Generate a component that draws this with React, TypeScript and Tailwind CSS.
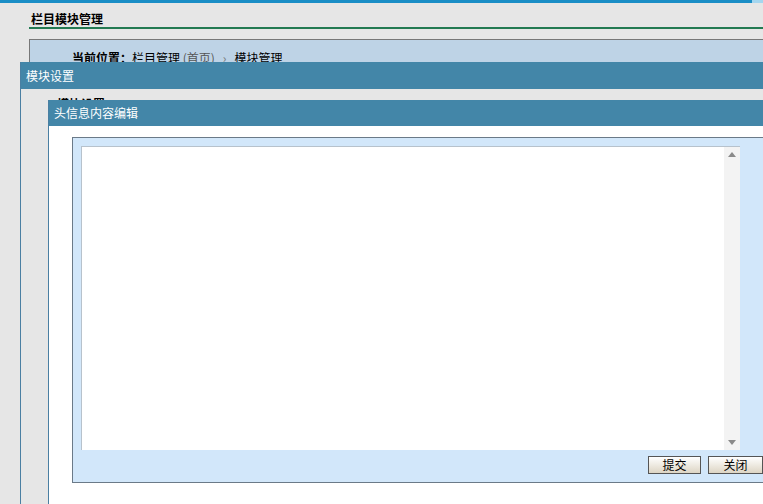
export default function App() {
  return (
    <div className="relative h-[504px] w-[763px] overflow-hidden bg-[#e6e6e6] font-['Noto_Sans_CJK_SC','Noto_Sans',sans-serif] text-[12px] text-black">
      {/* top strip */}
      <div className="flex h-[3px]">
        <div className="w-[752px] bg-[#1a8ec6]" />
        <div className="flex-1 bg-[#a4d6ef]" />
      </div>

      {/* page under the dialogs */}
      <div className="ml-[29px] pt-[9px]">
        <div className="border-b-2 border-[#237a52] pb-[1px] pl-[2px] font-bold leading-[14px]">栏目模块管理</div>
        <div className="mt-[10px] h-[60px] border-l border-t border-[#777] bg-[#bed3e6] pl-[42px] pt-[11px] leading-[14px]">
          <span className="font-bold">当前位置：</span>
          <span>栏目管理 </span>
          <span className="text-[#555]">(首页)</span>
          <span className="mx-[8px] text-[#777]">›</span>
          <span>模块管理</span>
        </div>
      </div>

      {/* dialog: 模块设置 */}
      <div className="absolute bottom-0 left-[20px] right-0 top-[62px] flex flex-col border-l border-[#4a7fa2] bg-[#e6e6e6]">
        <div className="flex h-[27px] items-center bg-[#4386a8] pl-[5px] text-white">模块设置</div>
        <div className="h-[11px] overflow-hidden pl-[36px] pt-[8px] font-bold leading-[14px]">模块设置</div>
      </div>

      {/* dialog: 头信息内容编辑 */}
      <div className="absolute bottom-0 left-[48px] right-0 top-[100px] flex flex-col border-l border-[#4a7fa2] bg-white">
        <div className="flex h-[26px] items-center bg-[#4386a8] pl-[5px] text-white">头信息内容编辑</div>
        <div className="pl-[23px] pt-[11px]">
          <div className="w-[720px] border-b border-l border-t border-[#6b7a88] bg-[#d2e7fa] pl-[8px] pt-[8px] pb-[8px]">
            <div className="flex h-[304px] w-[659px] border-l border-t border-[#b7c2cc] bg-white">
              <div className="flex-1" />
              <div className="flex w-[16px] flex-col items-center justify-between bg-[#f3f3f3] py-[5px]">
                <svg width="8" height="5" viewBox="0 0 8 5"><path d="M4 0 L8 5 L0 5 Z" fill="#8a8a8a" /></svg>
                <svg width="8" height="5" viewBox="0 0 8 5"><path d="M0 0 L8 0 L4 5 Z" fill="#8a8a8a" /></svg>
              </div>
            </div>
            <div className="mt-[6px] flex gap-[7px] pl-[567px]">
              <button className="h-[18px] w-[53px] border border-[#555] bg-gradient-to-b from-white to-[#ddd5c4] text-[12px] leading-[16px]">提交</button>
              <button className="h-[18px] w-[55px] border border-[#555] bg-gradient-to-b from-white to-[#ddd5c4] text-[12px] leading-[16px]">关闭</button>
            </div>
          </div>
        </div>
      </div>
    </div>
  );
}
